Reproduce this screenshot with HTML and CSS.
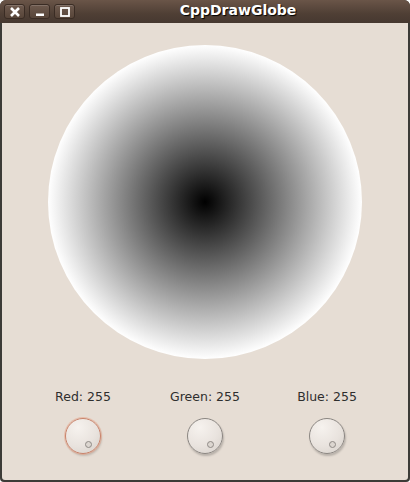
FILE: index.html
```html
<!DOCTYPE html>
<html lang="en">
<head>
  <meta charset="UTF-8" />
  <title>CppDrawGlobe</title>
  <link rel="stylesheet" href="styles.css">
</head>
<body>

<div class="window">
  <div class="titlebar">
    <div class="buttons">
      <span class="btn">
        <svg width="12" height="12" viewBox="0 0 12 12"><path d="M2 2 L10 10 M10 2 L2 10" stroke="#fff" stroke-width="2.6"/></svg>
      </span>
      <span class="btn">
        <svg width="12" height="12" viewBox="0 0 12 12"><rect x="2" y="7.5" width="8" height="2.5" fill="#fff"/></svg>
      </span>
      <span class="btn">
        <svg width="12" height="12" viewBox="0 0 12 12"><rect x="2" y="2" width="8" height="8" fill="none" stroke="#fff" stroke-width="1.8"/></svg>
      </span>
    </div>
    <div class="title">CppDrawGlobe</div>
  </div>

  <div class="content">
    <div class="globe"></div>

    <div class="dials">
      <div class="dial">
        <div class="label">Red: 255</div>
        <div class="knob focus"><span class="dot"></span></div>
      </div>
      <div class="dial">
        <div class="label">Green: 255</div>
        <div class="knob"><span class="dot"></span></div>
      </div>
      <div class="dial">
        <div class="label">Blue: 255</div>
        <div class="knob"><span class="dot"></span></div>
      </div>
    </div>
  </div>
</div>

</body>
</html>
```

FILE: styles.css
```css
* {
  box-sizing: border-box;
}
body {
  margin: 0;
  width: 410px;
  height: 482px;
  background: #ffffff;
  font-family: "DejaVu Sans", sans-serif;
}
.window {
  width: 410px;
  height: 482px;
  border-radius: 6px 6px 4px 4px;
  background: #3c3b37;
  padding: 0 2px 2px 2px;
  display: flex;
  flex-direction: column;
}
.titlebar {
  height: 23px;
  flex: none;
  background: linear-gradient(#6a5548, #4f3f35 60%, #463830);
  border-radius: 6px 6px 0 0;
  margin: 0 -2px;
  position: relative;
  display: flex;
  align-items: center;
}
.buttons {
  display: flex;
  gap: 4px;
  padding-left: 4px;
}
.btn {
  width: 21px;
  height: 15px;
  border: 1px solid #3a2c24;
  border-radius: 3px;
  background: linear-gradient(#6e5a4e, #574539);
  box-shadow: inset 0 1px 0 rgba(255,255,255,0.15);
  display: flex;
  align-items: center;
  justify-content: center;
}
.title {
  position: absolute;
  left: 0;
  right: 0;
  top: 2px;
  text-align: center;
  color: #ffffff;
  font-weight: bold;
  font-size: 14px;
  text-shadow: 1px 1px 1px #000;
  padding-left: 66px;
}
.content {
  flex: 1;
  background: #e6ddd4;
  border-radius: 0 0 3px 3px;
  display: flex;
  flex-direction: column;
  align-items: center;
}
.globe {
  margin-top: 22px;
  width: 314px;
  height: 314px;
  border-radius: 50%;
  background: radial-gradient(circle closest-side, #000000 0%, #ffffff 100%);
}
.dials {
  margin-top: 29px;
  width: 366px;
  display: flex;
}
.dial {
  flex: 1;
  display: flex;
  flex-direction: column;
  align-items: center;
}
.label {
  font-size: 12.5px;
  color: #2e2e2e;
  height: 17px;
  line-height: 17px;
}
.knob {
  margin-top: 13px;
  width: 36px;
  height: 36px;
  border-radius: 50%;
  border: 1px solid #8b8682;
  background: radial-gradient(circle at 35% 25%, #f6f2ee 0%, #e9e3de 55%, #d6d0ca 100%);
  box-shadow: 1px 2px 2px rgba(0,0,0,0.2);
  position: relative;
}
.knob.focus {
  border-color: #c9826a;
  box-shadow: 0 0 0 1px rgba(233,160,130,0.5), 1px 2px 2px rgba(0,0,0,0.15);
}
.dot {
  position: absolute;
  left: 19px;
  top: 22px;
  width: 7px;
  height: 7px;
  border-radius: 50%;
  border: 1px solid #8f8a86;
  background: #dcd6d0;
}
```
